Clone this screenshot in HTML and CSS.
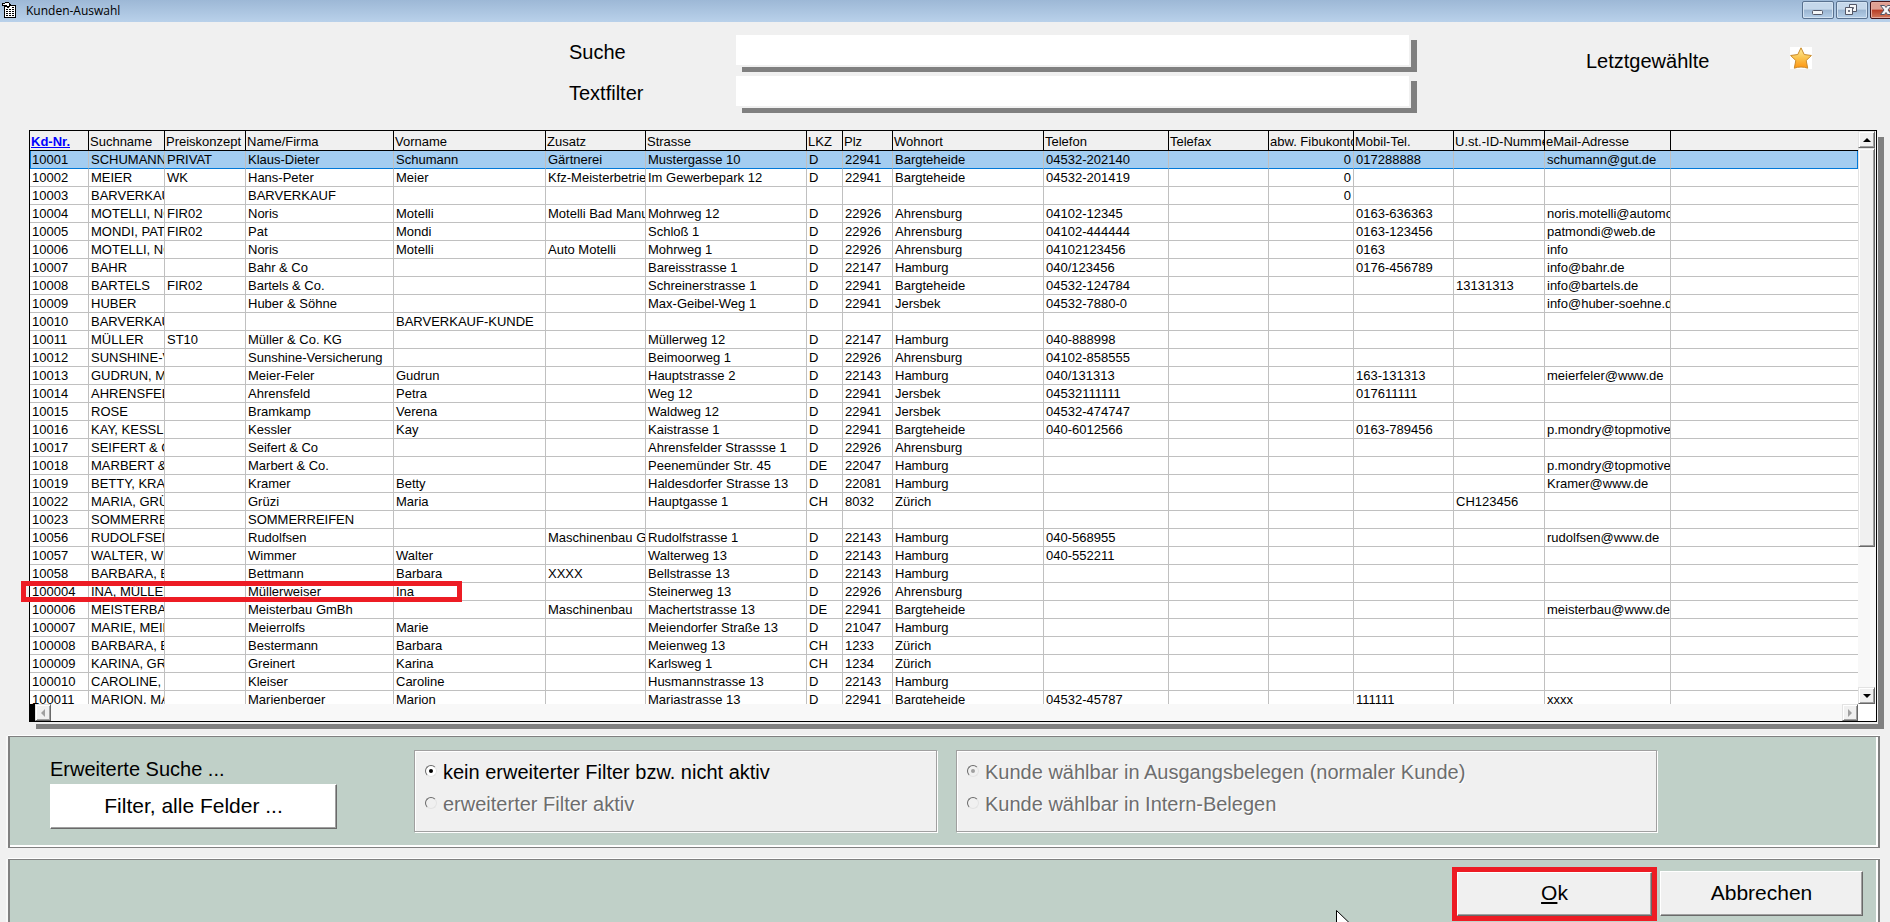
FILE: index.html
```html
<!DOCTYPE html>
<html lang="de">
<head>
<meta charset="utf-8">
<title>Kunden-Auswahl</title>
<link rel="stylesheet" href="styles.css">
</head>
<body>
<header class="titlebar">
  <svg class="app-icon" width="16" height="18" viewBox="0 0 16 18" shape-rendering="crispEdges" aria-hidden="true">
    <path d="M3 4h12v13H3z" fill="#fff"/>
    <path d="M3 4h1v13H3zM14 4h1v13h-1zM3 16h12v1H3zM9 4h6v1H9z" fill="#000"/>
    <path d="M5 8h2v1H5zM8 8h2v1H8zM11 8h2v1h-2zM5 10h2v1H5zM8 10h2v1H8zM11 10h2v1h-2zM5 12h2v1H5zM8 12h2v1H8zM11 12h2v1h-2zM5 14h2v1H5zM8 14h2v1H8zM11 14h2v1h-2zM11 6h2v1h-2z" fill="#000"/>
    <path d="M1 2h3V1h4v1h1v1h1v2H9v1H8v1H6V6H4V5H1z" fill="#000"/>
    <path d="M2 3h2v1H2zM4 2h4v2H4zM6 4h2v1H6z" fill="#fff"/>
  </svg>
  <h1 class="title">Kunden-Auswahl</h1>
  <div class="window-buttons">
    <button class="win-btn" type="button" aria-label="Minimieren">
      <svg width="30" height="16" viewBox="0 0 30 16"><rect x="9.500" y="8.500" width="10" height="4" rx="1" fill="#f4f6f8" stroke="#535666"/></svg>
    </button>
    <button class="win-btn" type="button" aria-label="Wiederherstellen">
      <svg width="30" height="16" viewBox="0 0 30 16" fill="#f4f6f8" stroke="#535666"><path d="M12.500 2.500h7v7h-7z"/><path d="M15.500 5.500h1v1h-1z"/><path d="M8.500 5.500h7v7h-7z"/><path d="M11.500 8.500h1v1h-1z" fill="#9db8d6"/></svg>
    </button>
    <button class="win-btn win-close" type="button" aria-label="Schließen">
      <svg width="30" height="16" viewBox="0 0 30 16"><path d="M9.500 3.500h4l1.500 2 1.500-2h4l-3.500 4.500 3.500 4.500h-4l-1.500-2-1.500 2h-4l3.500-4.500z" fill="#f6f6f8" stroke="#535666"/></svg>
    </button>
  </div>
</header>
<main class="window">
  <form class="search">
    <label class="search-label" for="suche">Suche</label>
    <input class="search-input" id="suche" type="text">
    <label class="search-label second" for="textfilter">Textfilter</label>
    <input class="search-input second" id="textfilter" type="text">
    <span class="recent">Letztgewählte</span>
    <button class="star" type="button" aria-label="Letztgewählte anzeigen">
      <svg width="22" height="22" viewBox="0 0 22 22">
        <defs><linearGradient id="gold" x1="0" y1="0" x2="0" y2="1"><stop offset="0" stop-color="#fff0a0"/><stop offset=".5" stop-color="#fbc44e"/><stop offset="1" stop-color="#ff9410"/></linearGradient></defs>
        <path d="M11 .800l3.200 6.700 7.200 1-5.200 5 1.500 7.700q-3.300-1.200-6.700-1.200t-6.700 1.200l1.500-7.700-5.200-5 7.200-1z" fill="url(#gold)" stroke="#c98a2c" stroke-linejoin="round"/>
      </svg>
    </button>
  </form>

  <section class="list">
    <div class="viewport">
      <table class="customers">
        <colgroup><col class="w59"><col class="w76"><col class="w81"><col class="w148"><col class="w152"><col class="w100"><col class="w161"><col class="w36"><col class="w50"><col class="w151"><col class="w125"><col class="w100"><col class="w85"><col class="w100"><col class="w91"><col class="w126"><col></colgroup>
        <thead><tr><th><a class="sort" href="#">Kd-Nr.</a><th>Suchname<th>Preiskonzept<th>Name/Firma<th>Vorname<th>Zusatz<th>Strasse<th>LKZ<th>Plz<th>Wohnort<th>Telefon<th>Telefax<th>abw. Fibukonto<th>Mobil-Tel.<th>U.st.-ID-Nummer<th>eMail-Adresse<th></tr></thead>
        <tbody>
        <tr class="selected"><td>10001<td>SCHUMANN<td>PRIVAT<td>Klaus-Dieter<td>Schumann<td>Gärtnerei<td>Mustergasse 10<td>D<td>22941<td>Bargteheide<td>04532-202140<td><td class="num">0<td>017288888<td><td>schumann@gut.de<td></tr>
        <tr><td>10002<td>MEIER<td>WK<td>Hans-Peter<td>Meier<td>Kfz-Meisterbetrieb<td>Im Gewerbepark 12<td>D<td>22941<td>Bargteheide<td>04532-201419<td><td class="num">0<td><td><td><td></tr>
        <tr><td>10003<td>BARVERKAUF<td><td>BARVERKAUF<td><td><td><td><td><td><td><td><td class="num">0<td><td><td><td></tr>
        <tr><td>10004<td>MOTELLI, NORIS<td>FIR02<td>Noris<td>Motelli<td>Motelli Bad Manufaktur<td>Mohrweg 12<td>D<td>22926<td>Ahrensburg<td>04102-12345<td><td><td>0163-636363<td><td>noris.motelli@automobile.de<td></tr>
        <tr><td>10005<td>MONDI, PAT<td>FIR02<td>Pat<td>Mondi<td><td>Schloß 1<td>D<td>22926<td>Ahrensburg<td>04102-444444<td><td><td>0163-123456<td><td>patmondi@web.de<td></tr>
        <tr><td>10006<td>MOTELLI, NORIS<td><td>Noris<td>Motelli<td>Auto Motelli<td>Mohrweg 1<td>D<td>22926<td>Ahrensburg<td>04102123456<td><td><td>0163<td><td>info<td></tr>
        <tr><td>10007<td>BAHR<td><td>Bahr &amp; Co<td><td><td>Bareisstrasse 1<td>D<td>22147<td>Hamburg<td>040/123456<td><td><td>0176-456789<td><td>info@bahr.de<td></tr>
        <tr><td>10008<td>BARTELS<td>FIR02<td>Bartels &amp; Co.<td><td><td>Schreinerstrasse 1<td>D<td>22941<td>Bargteheide<td>04532-124784<td><td><td><td>13131313<td>info@bartels.de<td></tr>
        <tr><td>10009<td>HUBER<td><td>Huber &amp; Söhne<td><td><td>Max-Geibel-Weg 1<td>D<td>22941<td>Jersbek<td>04532-7880-0<td><td><td><td><td>info@huber-soehne.de<td></tr>
        <tr><td>10010<td>BARVERKAUF<td><td><td>BARVERKAUF-KUNDE
          <td><td><td><td>
          <td><td><td><td>
          <td><td><td><td></tr>
        <tr><td>10011<td>MÜLLER<td>ST10<td>Müller &amp; Co. KG<td><td><td>Müllerweg 12<td>D<td>22147<td>Hamburg<td>040-888998<td><td><td><td><td><td></tr>
        <tr><td>10012<td>SUNSHINE-VERSICHERUNG<td><td>Sunshine-Versicherung<td><td><td>Beimoorweg 1<td>D<td>22926<td>Ahrensburg<td>04102-858555<td><td><td><td><td><td></tr>
        <tr><td>10013<td>GUDRUN, MEIER<td><td>Meier-Feler<td>Gudrun<td><td>Hauptstrasse 2<td>D<td>22143<td>Hamburg<td>040/131313<td><td><td>163-131313<td><td>meierfeler@www.de<td></tr>
        <tr><td>10014<td>AHRENSFELD<td><td>Ahrensfeld<td>Petra<td><td>Weg 12<td>D<td>22941<td>Jersbek<td>04532111111<td><td><td>017611111<td><td><td></tr>
        <tr><td>10015<td>ROSE<td><td>Bramkamp<td>Verena<td><td>Waldweg 12<td>D<td>22941<td>Jersbek<td>04532-474747<td><td><td><td><td><td></tr>
        <tr><td>10016<td>KAY, KESSLER<td><td>Kessler<td>Kay<td><td>Kaistrasse 1<td>D<td>22941<td>Bargteheide<td>040-6012566<td><td><td>0163-789456<td><td>p.mondry@topmotive.eu<td></tr>
        <tr><td>10017<td>SEIFERT &amp; CO<td><td>Seifert &amp; Co<td><td><td>Ahrensfelder Strassse 1<td>D<td>22926<td>Ahrensburg<td><td><td><td><td><td><td></tr>
        <tr><td>10018<td>MARBERT &amp; CO<td><td>Marbert &amp; Co.<td><td><td>Peenemünder Str. 45<td>DE<td>22047<td>Hamburg<td><td><td><td><td><td>p.mondry@topmotive.eu<td></tr>
        <tr><td>10019<td>BETTY, KRAMER<td><td>Kramer<td>Betty<td><td>Haldesdorfer Strasse 13<td>D<td>22081<td>Hamburg<td><td><td><td><td><td>Kramer@www.de<td></tr>
        <tr><td>10022<td>MARIA, GRÜZI<td><td>Grüzi<td>Maria<td><td>Hauptgasse 1<td>CH<td>8032<td>Zürich<td><td><td><td><td>CH123456<td><td></tr>
        <tr><td>10023<td>SOMMERREIFEN<td><td>SOMMERREIFEN<td>
          <td><td><td><td>
          <td><td><td><td>
          <td><td><td><td></tr>
        <tr><td>10056<td>RUDOLFSEN<td><td>Rudolfsen<td><td>Maschinenbau GmbH<td>Rudolfstrasse 1<td>D<td>22143<td>Hamburg<td>040-568955<td><td><td><td><td>rudolfsen@www.de<td></tr>
        <tr><td>10057<td>WALTER, WIMMER<td><td>Wimmer<td>Walter<td><td>Walterweg 13<td>D<td>22143<td>Hamburg<td>040-552211<td><td><td><td><td><td></tr>
        <tr><td>10058<td>BARBARA, BETTMANN<td><td>Bettmann<td>Barbara<td>XXXX<td>Bellstrasse 13<td>D<td>22143<td>Hamburg<td><td><td><td><td><td><td></tr>
        <tr><td>100004<td>INA, MÜLLERWEISER<td><td>Müllerweiser<td>Ina<td><td>Steinerweg 13<td>D<td>22926<td>Ahrensburg<td><td><td><td><td><td><td></tr>
        <tr><td>100006<td>MEISTERBAU<td><td>Meisterbau GmBh<td><td>Maschinenbau<td>Machertstrasse 13<td>DE<td>22941<td>Bargteheide<td><td><td><td><td><td>meisterbau@www.de<td></tr>
        <tr><td>100007<td>MARIE, MEIERROLFS<td><td>Meierrolfs<td>Marie<td><td>Meiendorfer Straße 13<td>D<td>21047<td>Hamburg<td><td><td><td><td><td><td></tr>
        <tr><td>100008<td>BARBARA, BESTERMANN<td><td>Bestermann<td>Barbara<td><td>Meienweg 13<td>CH<td>1233<td>Zürich<td><td><td><td><td><td><td></tr>
        <tr><td>100009<td>KARINA, GREINERT<td><td>Greinert<td>Karina<td><td>Karlsweg 1<td>CH<td>1234<td>Zürich<td><td><td><td><td><td><td></tr>
        <tr><td>100010<td>CAROLINE, KLEISER<td><td>Kleiser<td>Caroline<td><td>Husmannstrasse 13<td>D<td>22143<td>Hamburg<td><td><td><td><td><td><td></tr>
        <tr><td>100011<td>MARION, MARIENBERGER<td><td>Marienberger<td>Marion<td><td>Mariastrasse 13<td>D<td>22941<td>Bargteheide<td>04532-45787<td><td><td>111111<td><td>xxxx<td></tr>
        </tbody>
      </table>
    </div>
    <div class="vscroll">
      <button class="arrow" type="button" aria-label="Nach oben"><svg width="8" height="4" viewBox="0 0 8 4"><path d="M4 0l4 4H0z"/></svg></button>
      <div class="thumb"></div>
      <button class="arrow" type="button" aria-label="Nach unten"><svg width="8" height="4" viewBox="0 0 8 4"><path d="M4 4l4-4H0z"/></svg></button>
    </div>
    <div class="hscroll">
      <button class="arrow" type="button" aria-label="Nach links" disabled><svg width="4" height="8" viewBox="0 0 4 8"><path d="M0 4l4-4v8z"/></svg></button>
      <button class="arrow" type="button" aria-label="Nach rechts" disabled><svg width="4" height="8" viewBox="0 0 4 8"><path d="M4 4L0 0v8z"/></svg></button>
    </div>
    <div class="corner"></div>
    <div class="row-mark"></div>
  </section>

  <section class="panel filters">
    <div class="extended">
      <span class="extended-label">Erweiterte Suche ...</span>
      <button class="button button-white" type="button">Filter, alle Felder ...</button>
    </div>
    <div class="group group-filter" role="radiogroup" aria-label="Erweiterter Filter">
      <label class="option"><input class="radio" type="radio" name="filter" checked>kein erweiterter Filter bzw. nicht aktiv</label>
      <label class="option off"><input class="radio" type="radio" name="filter" disabled>erweiterter Filter aktiv</label>
    </div>
    <div class="group group-kunde" role="radiogroup" aria-label="Kunde wählbar">
      <label class="option off"><input class="radio" type="radio" name="kunde" checked disabled>Kunde wählbar in Ausgangsbelegen (normaler Kunde)</label>
      <label class="option off"><input class="radio" type="radio" name="kunde" disabled>Kunde wählbar in Intern-Belegen</label>
    </div>
  </section>

  <footer class="panel actions">
    <div class="ok-mark"><button class="button ok" type="submit"><span class="hotkey">O</span>k</button></div>
    <button class="button cancel" type="button">Abbrechen</button>
  </footer>
</main>
<svg class="cursor" width="14" height="20" viewBox="0 0 14 20" aria-hidden="true"><path d="M.5.500v17l4-4 3 6 2.500-1-3-6h6z" fill="#fff" stroke="#000"/></svg>
</body>
</html>
```
FILE: styles.css
```css
* { box-sizing: border-box; }

body {
  margin: 0;
  height: 100vh;
  overflow: hidden;
  display: flex;
  flex-direction: column;
  background: #f0f0f0;
  color: #000;
  font: 20px/24px "Liberation Sans", Arial, sans-serif;
}

button, input { font: inherit; color: inherit; }

/* Title bar */
.titlebar {
  flex: none;
  display: flex;
  height: 22px;
  padding-left: 1px;
  background: linear-gradient(#9db8d6, #b9d1ea);
}
.app-icon { margin-top: 1px; }
.title {
  margin: 0 auto 0 9px;
  font: 12px/22px "Open Sans", "Noto Sans", sans-serif;
}
.window-buttons {
  display: flex;
  gap: 2px;
  margin-right: -12px;
  padding-top: 1px;
}
.win-btn {
  width: 32px;
  height: 18px;
  padding: 0;
  border: 1px solid #59718f;
  border-radius: 2px;
  background: linear-gradient(#c5d7ea 0 45%, #9ab4d0 50%, #b5cfe9);
  box-shadow: inset 0 0 0 1px #d3e2f1;
}
.win-btn svg { display: block; }
.win-close {
  border-color: #43141a;
  background: linear-gradient(#e0a093 0 45%, #b83c25 50%, #d27a5e);
  box-shadow: inset 0 0 0 1px #e5a99d;
}

/* Window body */
.window {
  flex: 1;
  min-height: 0;
  display: flex;
  flex-direction: column;
}
.search {
  flex: none;
  display: grid;
  grid-template-columns: 569fr 167px 675fr 175fr 204px 100px;
  grid-template-rows: 32px 32px;
  row-gap: 9px;
  padding-top: 13px;
  margin-bottom: 22px;
}
.search-label { grid-column: 2; padding-top: 5px; }
.search-input {
  grid-column: 3;
  grid-row: 1;
  border: solid #f0f0f0;
  border-width: 0 2px 2px 0;
  padding: 0 6px;
  background: #fff;
  box-shadow: 6px 5px #808080;
  outline: none;
}
.search-input.second { grid-row: 2; }
.search-label.second { grid-row: 2; }
.recent { grid-column: 5; grid-row: 1 / 3; margin-top: 14px; }
.star {
  grid-column: 6;
  grid-row: 1 / 3;
  width: 22px;
  height: 22px;
  margin-top: 12px;
  padding: 0;
  border: 0;
  background: #fff;
}
.star svg { display: block; }

/* Customer list */
.list {
  position: relative;
  flex: 1;
  min-height: 0;
  display: grid;
  grid-template-columns: minmax(0, 1fr) 18px;
  grid-template-rows: minmax(0, 1fr) 17px;
  margin: 0 13px 0 29px;
  border: 1px solid #000;
  background: #fff;
  box-shadow: 1px 2px #f0f0f0, 7px 7px #808080;
}
.viewport { overflow: hidden; }
.customers {
  width: 100%;
  table-layout: fixed;
  border-collapse: separate;
  border-spacing: 0;
  font-size: 13px;
  line-height: 17px;
}
.customers th, .customers td {
  padding: 0 0 0 2px;
  height: 18px;
  overflow: hidden;
  white-space: nowrap;
  text-align: left;
  border-right: 1px solid #c0c0c0;
  border-bottom: 1px solid #c0c0c0;
}
.customers th {
  height: 20px;
  padding-left: 1px;
  padding-top: 2px;
  font-weight: normal;
  background: #f0f0f0;
  border-color: #000;
}
.customers th:last-child, .customers td:last-child { border-right: 0; }
.customers .num { padding-right: 2px; text-align: right; }
.customers .selected td { background: #a3cdf1; border-bottom-color: #0078d7; }
.customers .selected td:first-child { box-shadow: inset 1px 0 #0078d7; }
.customers .selected td:last-child { box-shadow: inset -1px 0 #0078d7; }
.sort { color: #00f; font-weight: bold; }

.w36 { width: 36px; }
.w50 { width: 50px; }
.w59 { width: 59px; }
.w76 { width: 76px; }
.w81 { width: 81px; }
.w85 { width: 85px; }
.w91 { width: 91px; }
.w100 { width: 100px; }
.w125 { width: 125px; }
.w126 { width: 126px; }
.w148 { width: 148px; }
.w151 { width: 151px; }
.w152 { width: 152px; }
.w161 { width: 161px; }

/* Scroll bars */
.vscroll, .hscroll {
  display: flex;
  justify-content: space-between;
  background: #f8f8f8;
}
.vscroll { flex-direction: column; padding-right: 1px; }
.hscroll { border-left: 5px solid #000; }
.arrow, .thumb {
  flex: none;
  background: #f0f0f0;
  border: 1px solid;
  border-color: #e3e3e3 #696969 #696969 #e3e3e3;
  box-shadow: inset 1px 1px #fff, inset -1px -1px #a0a0a0;
}
.arrow {
  display: grid;
  place-items: center;
  width: 17px;
  height: 17px;
  padding: 0;
}
.hscroll .arrow { width: 16px; }
.arrow:disabled { fill: #a0a0a0; }
.thumb { flex: 0 1 399px; margin-bottom: auto; }
.corner { background: #fff; }

.row-mark {
  position: absolute;
  left: -9px;
  top: 450px;
  width: 441px;
  height: 21px;
  border: 5px solid #ed1c24;
}

/* Green panels */
.panel {
  flex: none;
  display: flex;
  margin: 0 10px 0 8px;
  border: solid #808080;
  border-width: 1px 2px 1px 2px;
  background: #c0d0c8;
  box-shadow: inset -2px -2px #fff, 0 -1px #fff, -2px 0 #f8f8f8;
}
.filters { margin-top: 14px; padding: 13px 0 15px 40px; }
.extended {
  display: flex;
  flex-direction: column;
  width: 287px;
  margin-right: 77px;
  padding-top: 7px;
}
.extended-label { margin-bottom: 3px; }
.button {
  height: 45px;
  padding: 0 0 2px;
  border: 1px solid;
  border-color: #fff #696969 #696969 #fff;
  background: #f0f0f0;
  box-shadow: inset -1px -1px #a0a0a0;
  font-size: 21px;
}
.button-white { background: #fff; }
.group {
  height: 82px;
  padding: 9px 0 0 10px;
  border: 1px solid #a0a0a0;
  box-shadow: inset 1px 1px #fff, 1px 1px #fff;
  background: #f0f0f0;
}
.group-filter { width: 523px; margin-right: 19px; }
.group-kunde { width: 701px; }
.option {
  display: flex;
  align-items: center;
  gap: 6px;
  height: 24px;
  margin-bottom: 8px;
}
.option.off { color: #6d6d6d; text-shadow: 1px 1px #fff; }
.radio {
  appearance: none;
  display: grid;
  place-items: center;
  width: 12px;
  height: 12px;
  margin: 0 0 2px;
  border: 1px solid;
  border-color: #696969 #e3e3e3 #e3e3e3 #696969;
  border-radius: 50%;
  background: #fff;
}
.radio:disabled { background: #f0f0f0; }
.radio:checked::before {
  content: "";
  width: 4px;
  height: 4px;
  border-radius: 50%;
  background: #000;
}
.radio:checked:disabled::before { background: #a0a0a0; }

.actions {
  height: 63px;
  margin-top: 11px;
  justify-content: flex-end;
  align-items: flex-start;
  gap: 3px;
  padding: 7px 15px 0 0;
  border-bottom: 0;
  box-shadow: inset -2px 0 #fff, 0 -1px #fff, -2px 0 #f8f8f8;
}
.ok-mark { display: flex; border: 5px solid #ed1c24; }
.ok { width: 195px; height: 44px; }
.cancel { width: 203px; margin-top: 4px; }
.hotkey { text-decoration: underline; }

.cursor { position: absolute; left: 1336px; top: 910px; }
```
